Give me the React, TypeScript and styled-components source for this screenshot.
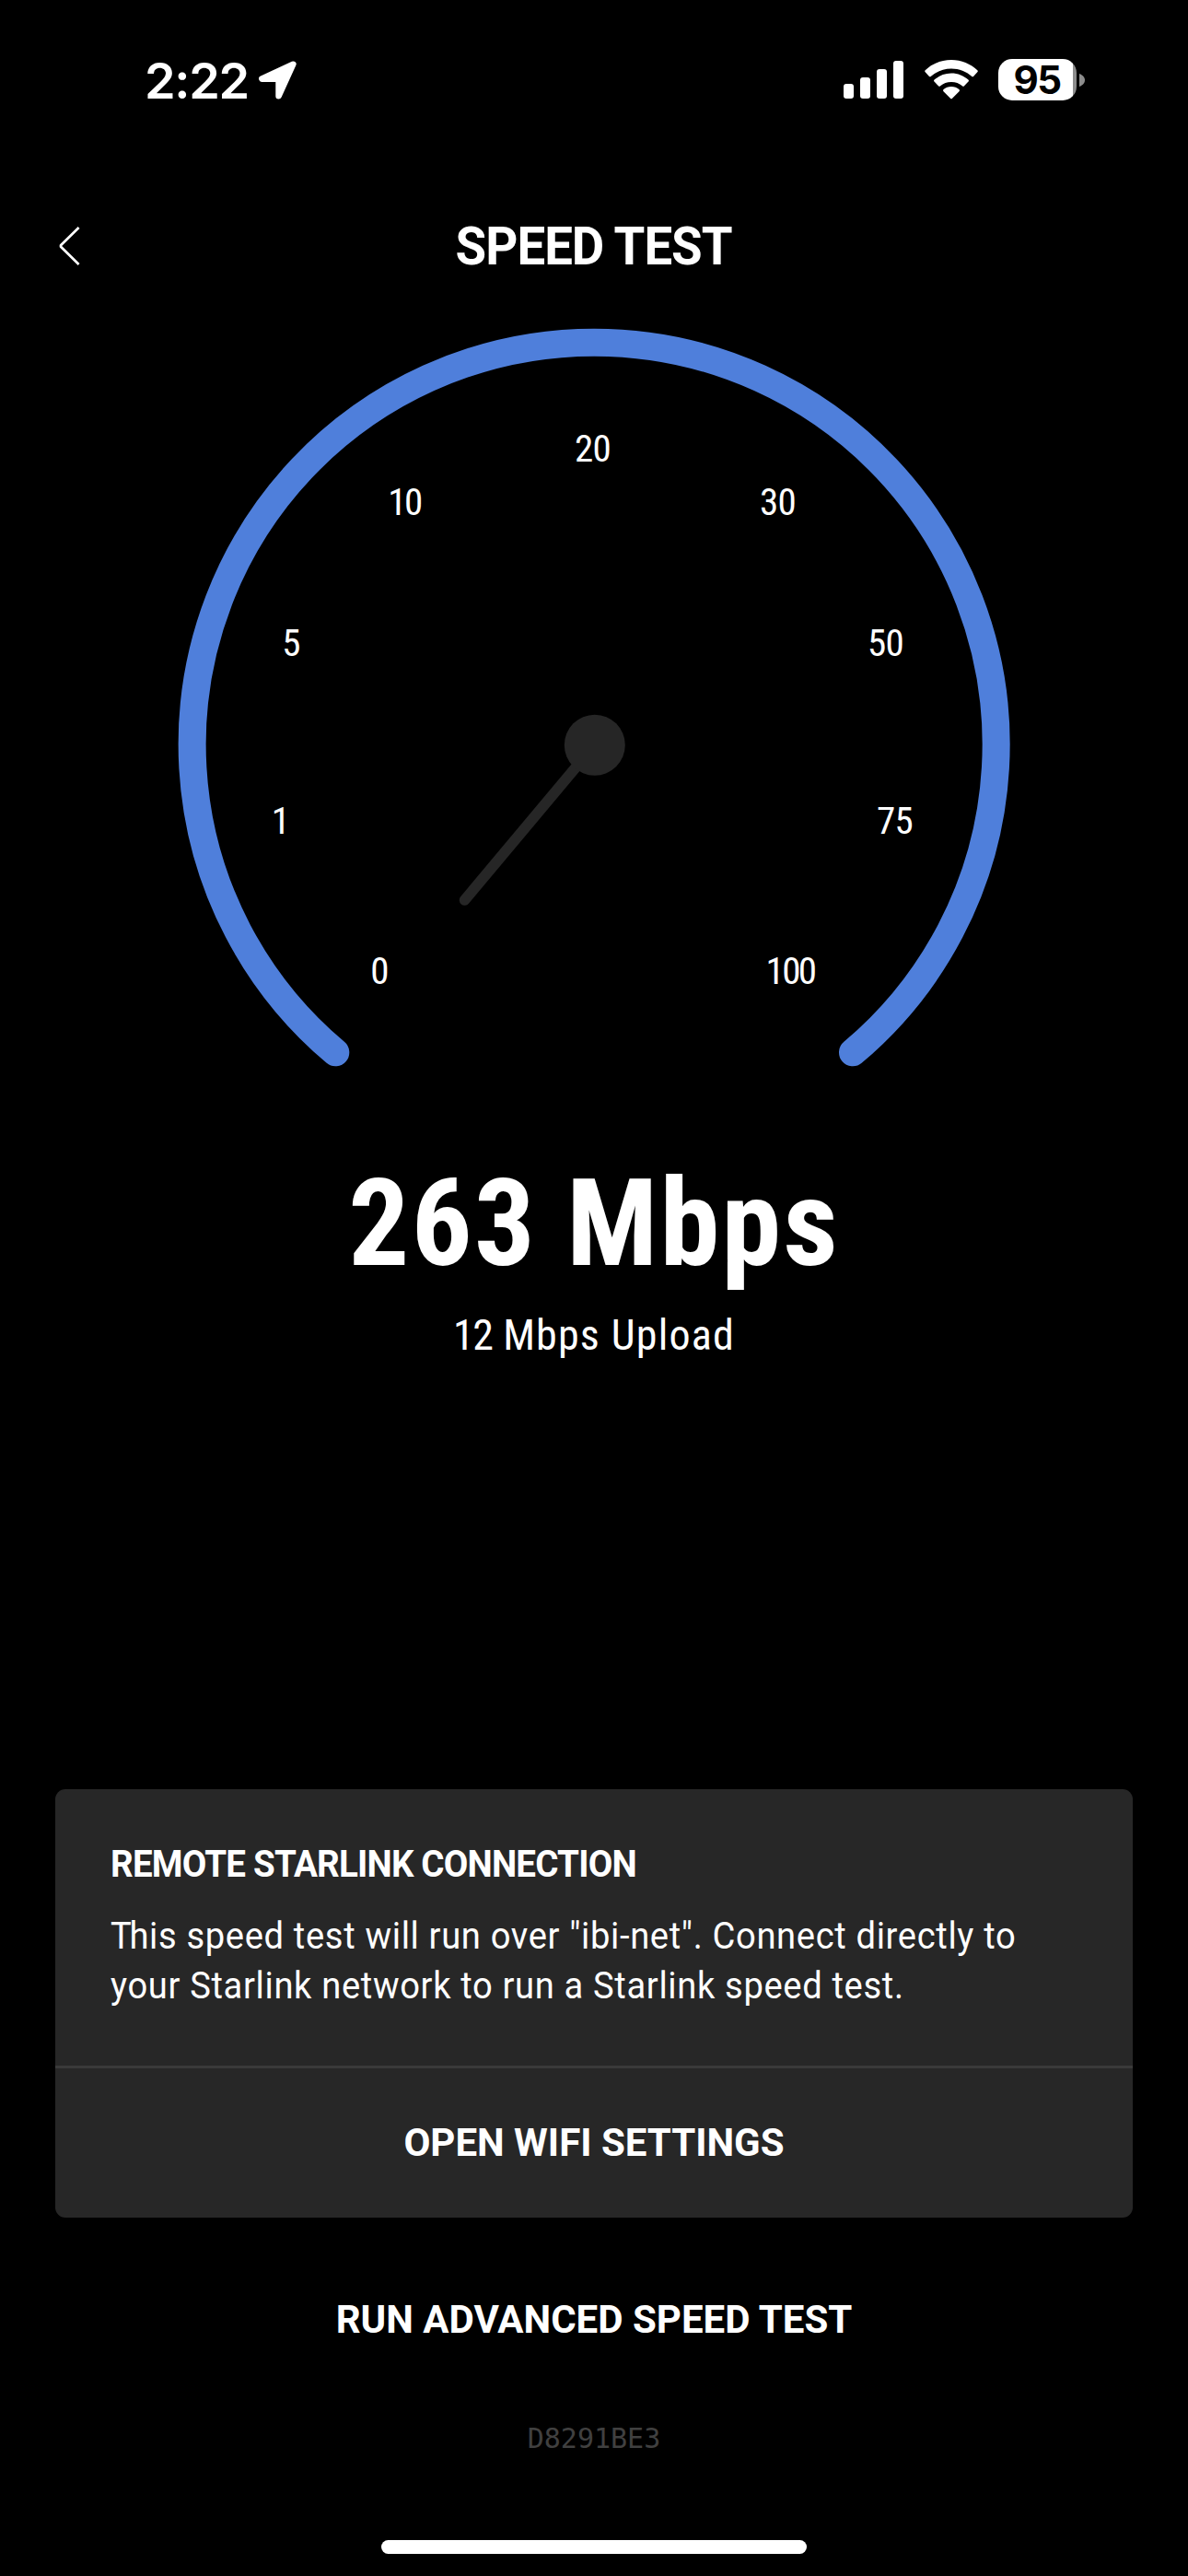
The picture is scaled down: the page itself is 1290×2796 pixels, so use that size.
import React from 'react';
import styled, { createGlobalStyle } from 'styled-components';

const GlobalStyle = createGlobalStyle`
  html, body { margin: 0; background: #000; }
  * { box-sizing: border-box; }
`;

const condensed = '"Roboto Condensed", Roboto, sans-serif';

const Screen = styled.main`
  display: flex;
  flex-direction: column;
  align-items: center;
  width: 1290px;
  height: 2796px;
  padding-bottom: 24px;
  background: #000;
  color: #fff;
  font-family: ${condensed};
  overflow: hidden;
`;

const StatusBar = styled.div`
  display: flex;
  align-items: center;
  justify-content: space-between;
  width: 100%;
  height: 173px;
  padding: 0 112px 0 157px;
  font-family: Inter, sans-serif;
`;

const StatusGroup = styled.div<{ $gap: number }>`
  display: flex;
  align-items: center;
  gap: ${(p) => p.$gap}px;
`;

const Time = styled.span`
  font-size: 54px;
  font-weight: 600;
  line-height: 60px;
  letter-spacing: -1.3px;
  padding-top: 2px;
`;

const SignalBars = styled.div`
  display: flex;
  align-items: flex-end;
  gap: 7px;
  height: 41px;
  margin-right: 1px;
`;

const SignalBar = styled.span<{ $height: number }>`
  width: 11px;
  height: ${(p) => p.$height}px;
  border-radius: 3px;
  background: #fff;
`;

const Battery = styled.div`
  display: flex;
  align-items: center;
  gap: 3px;
`;

const BatteryBody = styled.div`
  display: flex;
  align-items: center;
  justify-content: center;
  width: 85px;
  height: 45px;
  padding-right: 1px;
  border-radius: 15px;
  background: linear-gradient(90deg, #fff 81px, #8c8c8c 81px);
  color: #000;
  font-size: 42px;
  font-weight: 700;
  line-height: 45px;
  letter-spacing: -1.5px;
`;

const Header = styled.header`
  display: grid;
  grid-template-columns: 1fr auto 1fr;
  align-items: center;
  width: 100%;
  height: 168px;
  margin-top: 10px;
  padding: 0 64px;
`;

const BackButton = styled.button`
  display: flex;
  justify-self: start;
  padding: 0;
  border: 0;
  background: none;
  color: inherit;
`;

const Title = styled.h1`
  margin: 0;
  font-family: Roboto, sans-serif;
  font-size: 58px;
  font-weight: 700;
  line-height: 68px;
  letter-spacing: -1px;
  transform: scaleX(0.94);
`;

const Gauge = styled.svg`
  flex: none;
  display: block;
`;

const GaugeLabel = styled.text<{ $tight?: boolean }>`
  fill: #fff;
  font-family: ${condensed};
  font-size: 41px;
  font-weight: 400;
  letter-spacing: ${(p) => (p.$tight ? -2.6 : -0.8)}px;
  text-anchor: middle;
`;

const Download = styled.div`
  margin-top: 82px;
  font-size: 131px;
  font-weight: 700;
  line-height: 150px;
  letter-spacing: 2px;
`;

const Upload = styled.div`
  margin-top: 16px;
  font-size: 46px;
  font-weight: 400;
  line-height: 60px;
  letter-spacing: 1.2px;
`;

const Tight = styled.span<{ $spacing: number }>`
  letter-spacing: ${(p) => p.$spacing}px;
`;

const Card = styled.section`
  width: 1170px;
  margin-top: auto;
  border-radius: 11px;
  background: #272727;
`;

const CardBody = styled.div`
  display: flex;
  flex-direction: column;
  gap: 24px;
  padding: 54px 60px 60px;
  font-family: Roboto, sans-serif;
`;

const CardTitle = styled.h2`
  margin: 0;
  font-size: 41px;
  font-weight: 700;
  line-height: 54px;
  letter-spacing: -0.85px;
  transform: scaleX(0.94);
  transform-origin: left;
`;

const CardText = styled.p`
  margin: 0;
  font-size: 41px;
  font-weight: 400;
  line-height: 54px;
  letter-spacing: 0.7px;
  white-space: nowrap;
  transform: scaleX(0.93);
  transform-origin: left;
`;

const ActionButton = styled.button`
  display: block;
  padding: 0;
  border: 0;
  background: none;
  color: #fff;
  font-family: Roboto, sans-serif;
  font-size: 42px;
  font-weight: 700;
  line-height: 60px;
`;

const CardAction = styled(ActionButton)`
  width: 100%;
  height: 165px;
  border-top: 3px solid #3a3a3a;
`;

const AdvancedAction = styled(ActionButton)`
  margin-top: 81px;
`;

const DeviceId = styled.div`
  margin-top: 79px;
  color: #404040;
  font-family: "DejaVu Sans Mono", monospace;
  font-size: 30px;
  line-height: 40px;
`;

const HomeIndicator = styled.div`
  flex: none;
  width: 462px;
  height: 15px;
  margin-top: 90px;
  border-radius: 8px;
  background: #fff;
`;

const ticks = [
  { label: '0', x: 412, y: 1067.5 },
  { label: '1', x: 304.5, y: 905 },
  { label: '5', x: 316, y: 712 },
  { label: '10', x: 439, y: 559, tight: true },
  { label: '20', x: 643.5, y: 500.5 },
  { label: '30', x: 844.5, y: 559 },
  { label: '50', x: 961.5, y: 712 },
  { label: '75', x: 971.5, y: 905 },
  { label: '100', x: 858, y: 1067.5, tight: true },
];

const LocationArrow = () => (
  <svg width="43" height="43" viewBox="0 0 43 43">
    <path
      d="M38.3 4.7 4.4 20.6H22.6V39.2Z"
      fill="#fff"
      stroke="#fff"
      strokeWidth="6.6"
      strokeLinejoin="round"
    />
  </svg>
);

const WifiIcon = () => (
  <svg width="58" height="43" viewBox="0 0 58 43" fill="#fff">
    <path d="M29 0C40 0 50 4.300 57.300 11.300Q58.300 12.300 57.300 13.300L53 17.900Q52.100 18.800 51 17.800C45.300 12.800 37.600 9.600 29 9.600S12.700 12.800 7 17.800Q5.900 18.800 5 17.900L.7 13.300Q-.3 12.300 .7 11.300C8 4.300 18 0 29 0Z" />
    <path d="M29 14.500C36.100 14.500 42.600 17.200 47.400 21.600Q48.500 22.600 47.500 23.600L43 28.300Q42 29.300 40.900 28.300C37.700 25.600 33.600 24.100 29 24.100S20.300 25.600 17.100 28.300Q16 29.300 15 28.300L10.500 23.600Q9.500 22.600 10.600 21.600C15.400 17.200 21.900 14.500 29 14.500Z" />
    <path d="M29 29C32.300 29 35.200 30.200 37.400 32.100Q38.600 33.200 37.500 34.300L30 41.800Q29 42.800 28 41.800L20.500 34.300Q19.400 33.200 20.600 32.100C22.800 30.200 25.700 29 29 29Z" />
  </svg>
);

export default function App() {
  return (
    <>
      <GlobalStyle />
      <Screen>
        <StatusBar>
          <StatusGroup $gap={10}>
            <Time>2:22</Time>
            <LocationArrow />
          </StatusGroup>
          <StatusGroup $gap={22}>
            <SignalBars>
              {[16, 23, 32, 41].map((h) => (
                <SignalBar key={h} $height={h} />
              ))}
            </SignalBars>
            <WifiIcon />
            <Battery>
              <BatteryBody>95</BatteryBody>
              <svg width="6" height="14" viewBox="0 0 6 14">
                <path d="M0 0C3.500 1.200 6 3.800 6 7S3.500 12.800 0 14Z" fill="#8c8c8c" />
              </svg>
            </Battery>
          </StatusGroup>
        </StatusBar>

        <Header>
          <BackButton aria-label="Back">
            <svg width="24" height="44" viewBox="0 0 24 44" fill="none">
              <path d="M21.600 2 2 21.200V22.800L21.600 42" stroke="#fff" strokeWidth="2.700" strokeLinejoin="round" />
            </svg>
          </BackButton>
          <Title>SPEED TEST</Title>
        </Header>

        <Gauge width="1290" height="820" viewBox="0 351 1290 820">
          <path
            d="M364.300 1142.300A436.500 436.500 0 1 1 926 1142.300"
            fill="none"
            stroke="#4f7fdb"
            strokeWidth="30"
            strokeLinecap="round"
          />
          <path d="M645.500 808.700 504.500 977" stroke="#262626" strokeWidth="11.500" strokeLinecap="round" />
          <circle cx="645.800" cy="808.700" r="33" fill="#262626" />
          {ticks.map((t) => (
            <GaugeLabel key={t.label} x={t.x} y={t.y} $tight={t.tight}>
              {t.label}
            </GaugeLabel>
          ))}
        </Gauge>

        <Download>263 Mbps</Download>
        <Upload>
          <Tight $spacing={-1.5}>12</Tight> Mbps Upload
        </Upload>

        <Card>
          <CardBody>
            <CardTitle>REMOTE STARLINK CONNECTION</CardTitle>
            <CardText>
              <Tight $spacing={-2.5}>T</Tight>his speed test will run over "ibi-net". Connect directly to
              <br />
              your Starlink network to run a Starlink speed test.
            </CardText>
          </CardBody>
          <CardAction>OPEN WIFI SETTINGS</CardAction>
        </Card>
        <AdvancedAction>RUN ADVANCED SPEED TEST</AdvancedAction>
        <DeviceId>D8291BE3</DeviceId>
        <HomeIndicator />
      </Screen>
    </>
  );
}
